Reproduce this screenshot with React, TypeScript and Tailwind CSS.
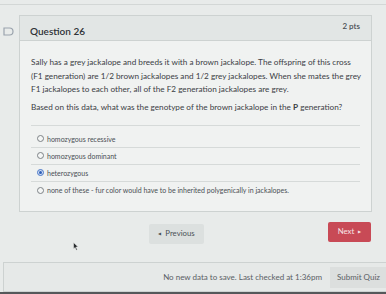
const options = [
    { label: "homozygous recessive", checked: false },
    { label: "homozygous dominant", checked: false },
    { label: "heterozygous", checked: true },
    { label: "none of these - fur color would have to be inherited polygenically in jackalopes.", checked: false },
];

const Radio = ({ checked }: { checked: boolean }) => {
    return (
        <span className={"flex h-[7px] w-[7px] shrink-0 items-center justify-center rounded-full border " + (checked ? "border-[#4a78c8] bg-[#cfdcf2]" : "border-[#7d8286] bg-[#f4f6f5]")}>
            {checked && <span className="h-[3px] w-[3px] rounded-full bg-[#2e5fb8]" />}
        </span>
    );
};

export default function App() {
    return (
        <div className="relative h-[294px] w-[386px] overflow-hidden bg-[#e8ebea] font-['Lato','Open_Sans',sans-serif] text-[#3b4045]">
            <div className="pt-[4px]">
                <div className="h-px w-full bg-[#d3d7d6]" />
            </div>

            <div className="mt-[10px] flex">
                <div className="flex w-[19px] shrink-0 justify-start pl-[3px] pt-[12px]">
                    <svg width="11" height="9" viewBox="0 0 11 9">
                        <path d="M1 1 H6.5 Q10 1 10 4.5 Q10 8 6.5 8 H1 Z" fill="none" stroke="#9aa3ad" strokeWidth="1.2" />
                    </svg>
                </div>

                <div className="w-[353px] border border-[#cdd2d1] bg-[#f0f2f1]">
                    <div className="flex h-[25px] items-start justify-between border-b border-[#cdd2d1] bg-[#e2e6e5] pl-[10px] pr-[11px]">
                        <span className="pt-[9px] text-[10px] font-semibold leading-[12px] text-[#2f3337]">Question 26</span>
                        <span className="pt-[5px] text-[8px] font-semibold leading-[10px] text-[#4a4f54]">2 pts</span>
                    </div>

                    <div className="pl-[11px] pr-[10px] pt-[15px]">
                        <p className="text-[8.2px] leading-[13.5px] text-[#3b4045]">
                            Sally has a grey jackalope and breeds it with a brown jackalope. The offspring of this cross (F1 generation) are 1/2 brown jackalopes and 1/2 grey jackalopes. When she mates the grey F1 jackalopes to each other, all of the F2 generation jackalopes are grey.
                        </p>
                        <p className="mt-[4px] text-[8.2px] leading-[13px] text-[#3b4045]">
                            Based on this data, what was the genotype of the brown jackalope in the <span className="font-bold">P</span> generation?
                        </p>

                        <div className="mt-[11px] mr-[1px] border-t border-[#d6dad9] pt-[5px]">
                            {options.map((o, i) => (
                                <div key={i} className={"flex h-[17px] items-center gap-[3px] pl-[6px] " + (i < options.length - 1 ? "border-b border-[#d6dad9]" : "")}>
                                    <Radio checked={o.checked} />
                                    <span className="text-[7px] leading-[8px] text-[#4a4f54]">{o.label}</span>
                                </div>
                            ))}
                        </div>
                        <div className="h-[12px]" />
                    </div>
                </div>
            </div>

            <div className="mt-[11px] flex items-start pl-[149px] pr-[15px]">
                <button className="mt-[1px] flex h-[20px] w-[55px] items-center justify-center gap-[4px] rounded-[2px] bg-[#dce0df] text-[7.8px] text-[#4b5156]">
                    <span className="text-[4px]">◀</span>
                    <span>Previous</span>
                </button>
                <div className="flex-1" />
                <button className="-mt-[1px] flex h-[20px] w-[43px] items-center justify-center gap-[4px] rounded-[2px] bg-[#c84a56] text-[7.8px] text-[#f7e4e6]">
                    <span>Next</span>
                    <span className="text-[4px]">▶</span>
                </button>
            </div>

            <svg className="absolute left-[73px] top-[242px]" width="6" height="9" viewBox="0 0 6 9">
                <path d="M0.5 0.5 L0.5 7 L2 5.5 L3.3 8.3 L4.3 7.8 L3 5 L5.2 5 Z" fill="#2a2d30" stroke="#f0f2f1" strokeWidth="0.5" />
            </svg>

            <div className="absolute left-[3px] top-[262px] flex h-[30px] w-[390px] items-center border border-[#cdd2d1] bg-[#e6e9e8]">
                <div className="flex-1" />
                <span className="pr-[8px] text-[8px] text-[#5a6065]">No new data to save. Last checked at 1:36pm</span>
                <div className="flex h-[21px] w-[62px] items-center pl-[7px] text-[8px] bg-[#dcdfde] text-[#5a6065]">Submit Quiz</div>
            </div>

            <div className="absolute left-0 top-[292px] h-[2px] w-full bg-[#55585a]" />
        </div>
    );
}
